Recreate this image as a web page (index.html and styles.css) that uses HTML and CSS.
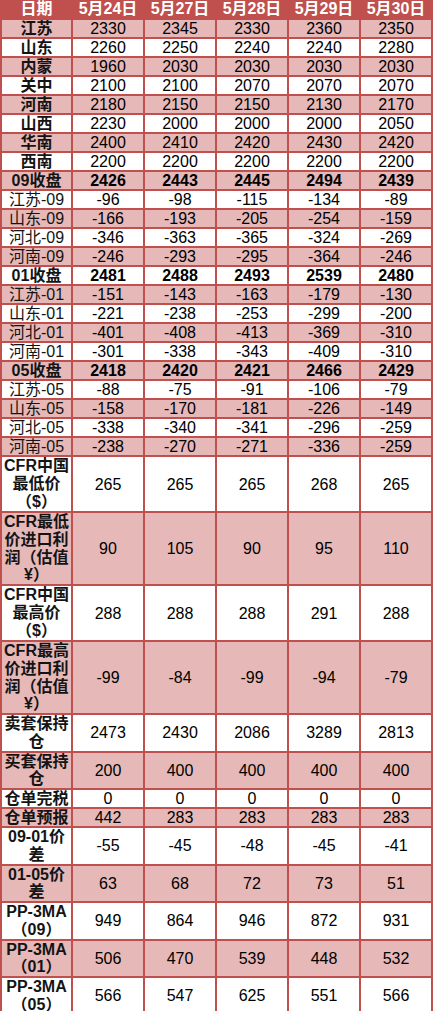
FILE: index.html
```html
<!DOCTYPE html>
<html lang="zh-CN">
<head>
<meta charset="utf-8">
<title>PP 价格表</title>
<link rel="stylesheet" href="styles.css">
</head>
<body>
<table class="sheet">
  <colgroup>
    <col class="c-label">
    <col class="c-val"><col class="c-val"><col class="c-val"><col class="c-val"><col class="c-val">
  </colgroup>
  <thead>
    <tr><th>日期</th><th>5月24日</th><th>5月27日</th><th>5月28日</th><th>5月29日</th><th>5月30日</th></tr>
  </thead>
  <tbody>
    <tr><td class="lab">江苏</td><td>2330</td><td>2345</td><td>2330</td><td>2360</td><td>2350</td></tr>
    <tr><td class="lab">山东</td><td>2260</td><td>2250</td><td>2240</td><td>2240</td><td>2280</td></tr>
    <tr><td class="lab">内蒙</td><td>1960</td><td>2030</td><td>2030</td><td>2030</td><td>2030</td></tr>
    <tr><td class="lab">关中</td><td>2100</td><td>2100</td><td>2070</td><td>2070</td><td>2070</td></tr>
    <tr><td class="lab">河南</td><td>2180</td><td>2150</td><td>2150</td><td>2130</td><td>2170</td></tr>
    <tr><td class="lab">山西</td><td>2230</td><td>2000</td><td>2000</td><td>2000</td><td>2050</td></tr>
    <tr><td class="lab">华南</td><td>2400</td><td>2410</td><td>2420</td><td>2430</td><td>2420</td></tr>
    <tr><td class="lab">西南</td><td>2200</td><td>2200</td><td>2200</td><td>2200</td><td>2200</td></tr>
    <tr class="bold"><td class="lab">09收盘</td><td>2426</td><td>2443</td><td>2445</td><td>2494</td><td>2439</td></tr>
    <tr><td class="sub">江苏-09</td><td>-96</td><td>-98</td><td>-115</td><td>-134</td><td>-89</td></tr>
    <tr><td class="sub">山东-09</td><td>-166</td><td>-193</td><td>-205</td><td>-254</td><td>-159</td></tr>
    <tr><td class="sub">河北-09</td><td>-346</td><td>-363</td><td>-365</td><td>-324</td><td>-269</td></tr>
    <tr><td class="sub">河南-09</td><td>-246</td><td>-293</td><td>-295</td><td>-364</td><td>-246</td></tr>
    <tr class="bold"><td class="lab">01收盘</td><td>2481</td><td>2488</td><td>2493</td><td>2539</td><td>2480</td></tr>
    <tr><td class="sub">江苏-01</td><td>-151</td><td>-143</td><td>-163</td><td>-179</td><td>-130</td></tr>
    <tr><td class="sub">山东-01</td><td>-221</td><td>-238</td><td>-253</td><td>-299</td><td>-200</td></tr>
    <tr><td class="sub">河北-01</td><td>-401</td><td>-408</td><td>-413</td><td>-369</td><td>-310</td></tr>
    <tr><td class="sub">河南-01</td><td>-301</td><td>-338</td><td>-343</td><td>-409</td><td>-310</td></tr>
    <tr class="bold"><td class="lab">05收盘</td><td>2418</td><td>2420</td><td>2421</td><td>2466</td><td>2429</td></tr>
    <tr><td class="sub">江苏-05</td><td>-88</td><td>-75</td><td>-91</td><td>-106</td><td>-79</td></tr>
    <tr><td class="sub">山东-05</td><td>-158</td><td>-170</td><td>-181</td><td>-226</td><td>-149</td></tr>
    <tr><td class="sub">河北-05</td><td>-338</td><td>-340</td><td>-341</td><td>-296</td><td>-259</td></tr>
    <tr><td class="sub">河南-05</td><td>-238</td><td>-270</td><td>-271</td><td>-336</td><td>-259</td></tr>
    <tr class="r3"><td class="lab multi">CFR中国最低价（$）</td><td>265</td><td>265</td><td>265</td><td>268</td><td>265</td></tr>
    <tr class="r4"><td class="lab multi">CFR最低价进口利润（估值¥）</td><td>90</td><td>105</td><td>90</td><td>95</td><td>110</td></tr>
    <tr class="r3"><td class="lab multi">CFR中国最高价（$）</td><td>288</td><td>288</td><td>288</td><td>291</td><td>288</td></tr>
    <tr class="r4"><td class="lab multi">CFR最高价进口利润（估值¥）</td><td>-99</td><td>-84</td><td>-99</td><td>-94</td><td>-79</td></tr>
    <tr class="r2"><td class="lab multi">卖套保持仓</td><td>2473</td><td>2430</td><td>2086</td><td>3289</td><td>2813</td></tr>
    <tr class="r2"><td class="lab multi">买套保持仓</td><td>200</td><td>400</td><td>400</td><td>400</td><td>400</td></tr>
    <tr><td class="lab">仓单完税</td><td>0</td><td>0</td><td>0</td><td>0</td><td>0</td></tr>
    <tr><td class="lab">仓单预报</td><td>442</td><td>283</td><td>283</td><td>283</td><td>283</td></tr>
    <tr class="r2"><td class="lab multi">09-01价差</td><td>-55</td><td>-45</td><td>-48</td><td>-45</td><td>-41</td></tr>
    <tr class="r2"><td class="lab multi">01-05价差</td><td>63</td><td>68</td><td>72</td><td>73</td><td>51</td></tr>
    <tr class="r2"><td class="lab multi">PP-3MA（09）</td><td>949</td><td>864</td><td>946</td><td>872</td><td>931</td></tr>
    <tr class="r2"><td class="lab multi">PP-3MA（01）</td><td>506</td><td>470</td><td>539</td><td>448</td><td>532</td></tr>
    <tr class="r2"><td class="lab multi">PP-3MA（05）</td><td>566</td><td>547</td><td>625</td><td>551</td><td>566</td></tr>
  </tbody>
</table>
</body>
</html>
```

FILE: styles.css
```css
html, body {
  margin: 0;
  padding: 0;
  background: #ffffff;
}

.sheet {
  border-collapse: separate;
  border-spacing: 0;
  table-layout: fixed;
  width: 433px;
  border-left: 2px solid #c0504d;
  font-family: "Liberation Sans", "Noto Sans CJK SC", sans-serif;
  font-size: 16px;
  color: #000000;
  text-spacing-trim: space-all;
}

.c-label { width: 71px; }
.c-val { width: 72px; }

.sheet th,
.sheet td {
  box-sizing: border-box;
  padding: 0;
  border-right: 2px solid #c0504d;
  border-bottom: 2px solid #c0504d;
  height: 19px;
  line-height: 17px;
  text-align: center;
  vertical-align: middle;
  font-weight: 400;
  overflow: hidden;
}

.sheet thead th {
  background: #c0504d;
  color: #ffffff;
  font-weight: 700;
  height: 20px;
  line-height: 18px;
}

.sheet tbody tr:nth-child(odd) td {
  background: #e6b8b7;
}

.sheet td.lab {
  font-weight: 700;
  color: #141414;
}

.sheet td.sub {
  font-weight: 400;
  color: #141414;
}

.sheet tr.bold td {
  font-weight: 700;
}

.sheet td.multi {
  line-height: 17.75px;
}

.sheet tr.r2 td { height: 37px; }
.sheet tr.r3 td { height: 56px; }
.sheet tr.r4 td { height: 73px; }
```
